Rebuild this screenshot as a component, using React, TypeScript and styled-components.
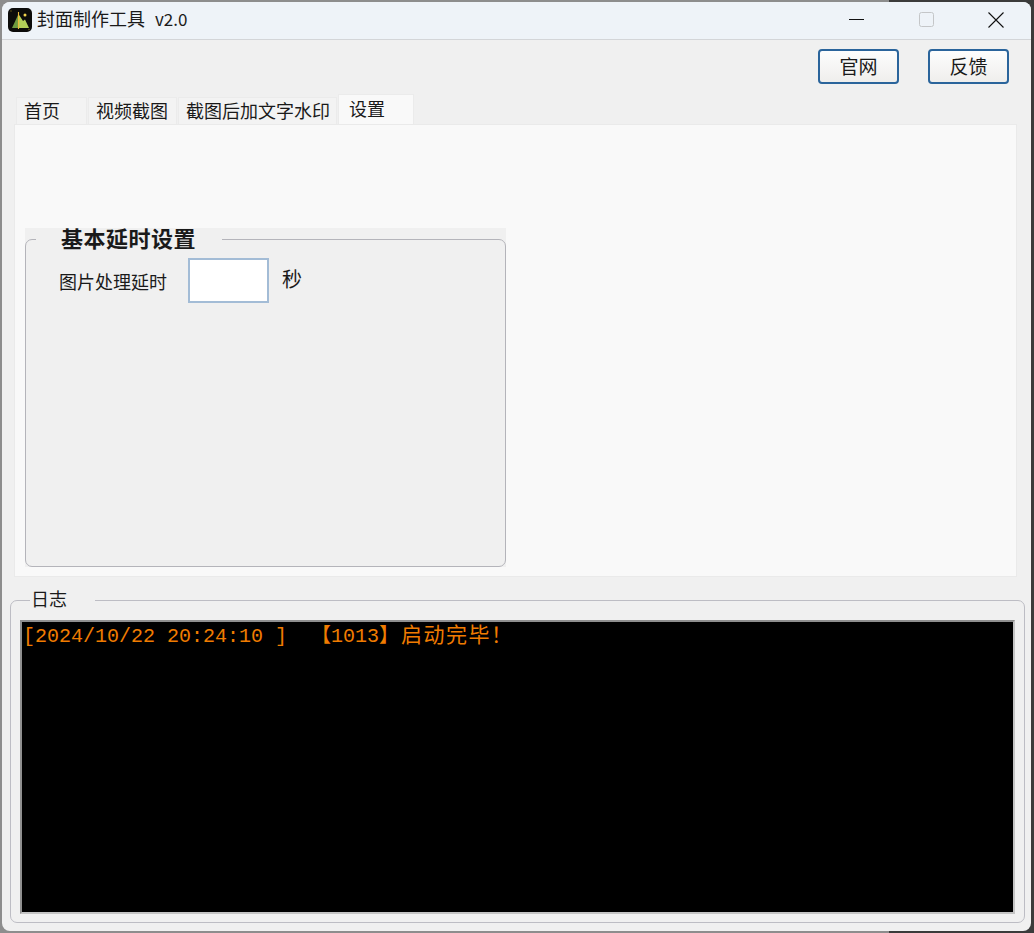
import { createGlobalStyle } from "styled-components";
import styled from "styled-components";

const CJK = `"Noto Sans CJK SC", "Liberation Sans", sans-serif`;

const GlobalStyle = createGlobalStyle`
  html, body {
    margin: 0;
    height: 100%;
    background: #3a3a3a;
  }
  * {
    box-sizing: border-box;
  }
`;

const Desktop = styled.div`
  width: 1034px;
  height: 933px;
  padding: 2px 3px 2px 2px;
  background: linear-gradient(90deg, #8d8d8d 0, #8d8d8d 86%, #3b3b3b 86%);
  overflow: hidden;
`;

const Window = styled.div`
  height: 100%;
  display: flex;
  flex-direction: column;
  background: #f0f0f0;
  border-radius: 8px;
  overflow: hidden;
  font-family: ${CJK};
  color: #1a1a1a;
`;

const TitleBar = styled.header`
  flex: none;
  height: 38px;
  display: flex;
  align-items: center;
  padding: 0 0 2px 6px;
  background: #eef3f8;
  border-bottom: 1px solid #d3d5d8;
`;

const Logo = styled.svg`
  width: 24px;
  height: 24px;
  flex: none;
`;

const Title = styled.span`
  flex: 1;
  margin: 0 0 2px 5px;
  font-size: 18px;
  line-height: 20px;
  white-space: pre;
`;

const Version = styled.span`
  font-size: 17px;
  margin-left: 10px;
`;

const WinButton = styled.button`
  width: 70px;
  height: 35px;
  padding: 0;
  border: 0;
  background: none;
  display: flex;
  align-items: center;
  justify-content: center;
`;

const ToolBar = styled.div`
  flex: none;
  height: 56px;
  display: flex;
  justify-content: flex-end;
  align-items: flex-start;
  gap: 29px;
  padding: 9px 22px 0 0;
`;

const ActionButton = styled.button`
  width: 81px;
  height: 35px;
  padding: 0 0 2px;
  border: 2px solid #2a649b;
  border-radius: 4px;
  background: linear-gradient(180deg, #fdfdfd, #efeeec);
  font-family: ${CJK};
  font-size: 19px;
  line-height: 27px;
  color: #1a1a1a;
`;

const TabRow = styled.div`
  flex: none;
  height: 28px;
  display: flex;
  align-items: flex-end;
  margin-left: 14px;
`;

const Tab = styled.div<{ $active?: boolean; $width: number }>`
  width: ${(p) => p.$width}px;
  height: ${(p) => (p.$active ? 30 : 27)}px;
  margin-right: ${(p) => (p.$active ? 0 : 1)}px;
  padding-left: ${(p) => (p.$active ? 10 : 7)}px;
  background: ${(p) => (p.$active ? "#f9f9f9" : "#f3f3f3")};
  border: 1px solid #ebebeb;
  border-bottom: 0;
  font-size: 18px;
  line-height: ${(p) => (p.$active ? 26 : 25)}px;
  white-space: nowrap;
`;

const TabPanel = styled.section`
  flex: none;
  height: 453px;
  margin: 0 14px 0 12px;
  padding: 103px 0 0 10px;
  background: #f9f9f9;
  border: 1px solid #eaeaea;
`;

const GroupFrame = styled.div`
  width: 481px;
  height: 339px;
  background: #f0f0f0;
`;

const GroupBox = styled.fieldset`
  height: 100%;
  margin: 0;
  padding: 6px 0 0 0;
  border: 1px solid #b4b4ba;
  border-radius: 7px;
  background: none;
`;

const GroupTitle = styled.legend`
  margin-left: 10px;
  padding: 0 26px 0 25px;
  font-size: 22px;
  font-weight: 700;
  line-height: 22px;
  letter-spacing: 0.5px;
  transform: translateY(-2px);
`;

const FieldRow = styled.div`
  display: flex;
  align-items: center;
  padding-left: 33px;
`;

const FieldLabel = styled.label`
  width: 129px;
  font-size: 18px;
  line-height: 46px;
  margin-top: 2px;
`;

const DelayInput = styled.input`
  width: 81px;
  height: 45px;
  padding: 0 4px;
  background: #fff;
  border: 2px solid #a3bcd6;
`;

const Unit = styled.span`
  margin: -4px 0 0 13px;
  font-size: 20px;
`;

const LogBox = styled.fieldset`
  flex: none;
  height: 335px;
  margin: 11px 6px 0 8px;
  padding: 8px 9px 11px 9px;
  border: 1px solid #bdbdc4;
  border-radius: 7px;
  min-width: 0;
`;

const LogTitle = styled.legend`
  margin-left: 10px;
  padding: 0 28px 0 1px;
  font-size: 18px;
  line-height: 24px;
  transform: translateY(-2px);
`;

const Console = styled.div`
  height: 294px;
  padding: 1px;
  background: #000;
  border: 2px solid #8f8f8f;
  border-right-color: #c4c4c4;
  border-bottom-color: #c4c4c4;
  color: #f07c00;
  font-family: "Liberation Mono", "Noto Sans CJK SC", monospace;
  font-size: 20px;
  line-height: 28px;
  white-space: pre;
`;

const ConsoleCjk = styled.span`
  font-size: 21px;
  margin-left: 2px;
  letter-spacing: 1.5px;
`;

const App = () => {
  return (
    <>
      <GlobalStyle />
      <Desktop>
        <Window>
          <TitleBar>
            <Logo viewBox="0 0 24 24">
              <rect width="24" height="24" rx="5" fill="#0c0c0a" />
              <path d="M4 20 L10.5 6 V20 Z" fill="#6f9a3f" />
              <path d="M10.5 6 L15 13 L17 11.5 L21 20 H10.5 Z" fill="#b3cf58" />
              <path d="M10.5 4 V21" stroke="#e8b93a" strokeWidth="1.1" />
              <circle cx="17" cy="7" r="1.5" fill="#f2d24c" />
              <circle cx="3" cy="3" r="0.7" fill="#7a6a20" />
              <circle cx="21" cy="21.5" r="0.7" fill="#7a6a20" />
            </Logo>
            <Title>
              封面制作工具<Version>v2.0</Version>
            </Title>
            <WinButton aria-label="最小化">
              <svg width="15" height="15" viewBox="0 0 15 15">
                <path d="M0 7.5 H15" stroke="#111" strokeWidth="1" />
              </svg>
            </WinButton>
            <WinButton aria-label="最大化">
              <svg width="15" height="15" viewBox="0 0 15 15">
                <rect x="0.5" y="0.5" width="14" height="14" rx="2" fill="none" stroke="#c4c6c8" />
              </svg>
            </WinButton>
            <WinButton aria-label="关闭">
              <svg width="16" height="16" viewBox="0 0 16 16">
                <path d="M0.5 0.5 L15.5 15.5 M15.5 0.5 L0.5 15.5" stroke="#111" strokeWidth="1.1" />
              </svg>
            </WinButton>
          </TitleBar>
          <ToolBar>
            <ActionButton>官网</ActionButton>
            <ActionButton>反馈</ActionButton>
          </ToolBar>
          <TabRow>
            <Tab $width={71}>首页</Tab>
            <Tab $width={89}>视频截图</Tab>
            <Tab $width={159}>截图后加文字水印</Tab>
            <Tab $width={76} $active>设置</Tab>
          </TabRow>
          <TabPanel>
            <GroupFrame>
              <GroupBox>
                <GroupTitle>基本延时设置</GroupTitle>
                <FieldRow>
                  <FieldLabel>图片处理延时</FieldLabel>
                  <DelayInput />
                  <Unit>秒</Unit>
                </FieldRow>
              </GroupBox>
            </GroupFrame>
          </TabPanel>
          <LogBox>
            <LogTitle>日志</LogTitle>
            <Console>
              {"[2024/10/22 20:24:10 ]  【1013】"}
              <ConsoleCjk>启动完毕！</ConsoleCjk>
            </Console>
          </LogBox>
        </Window>
      </Desktop>
    </>
  );
};

export default App;
